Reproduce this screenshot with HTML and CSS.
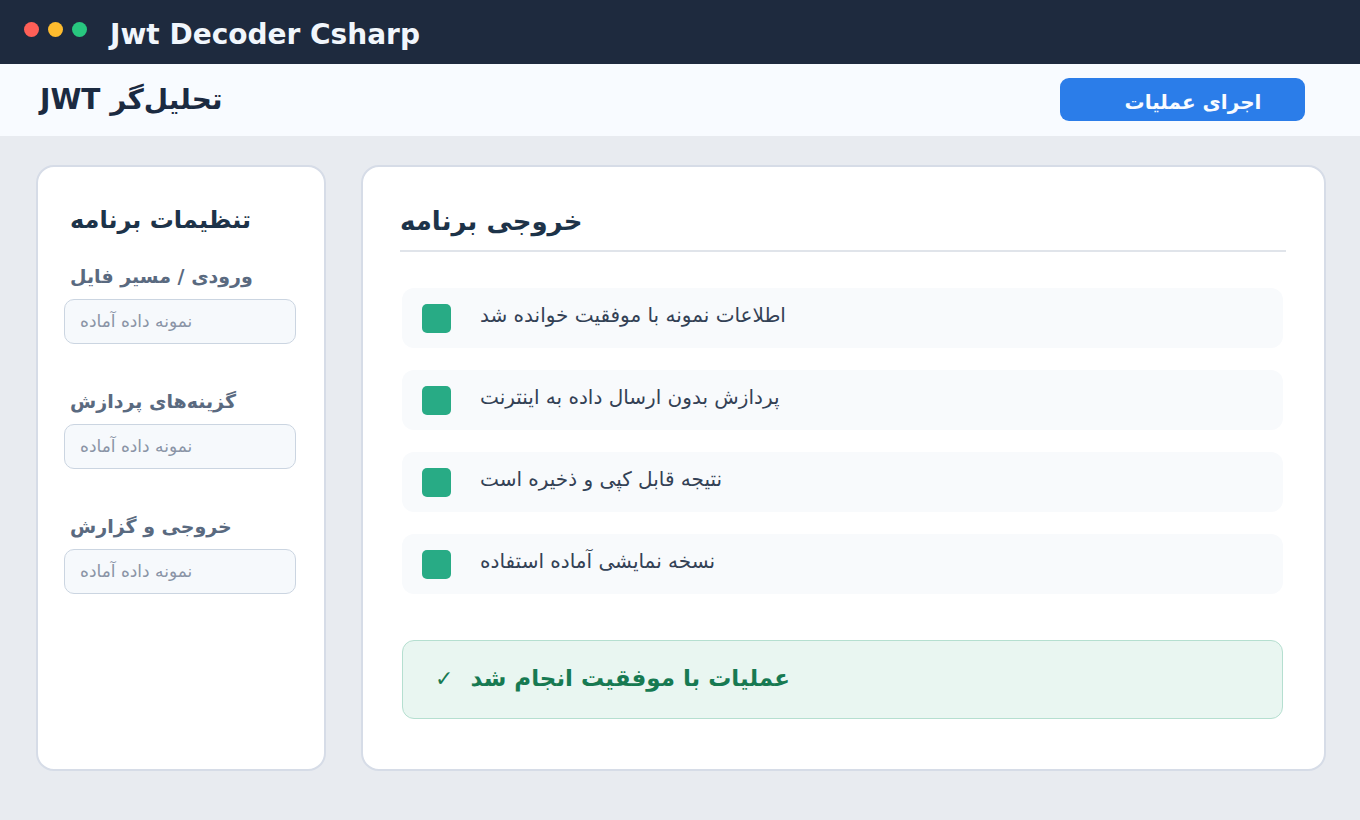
FILE: index.html
```html
<!DOCTYPE html>
<html lang="fa">
<head>
<meta charset="utf-8">
<title>Jwt Decoder Csharp</title>
<link rel="stylesheet" href="styles.css">
</head>
<body>
<header class="titlebar">
  <div class="dots"><span class="dot red"></span><span class="dot amber"></span><span class="dot green"></span></div>
  <h1 class="app-name">Jwt Decoder Csharp</h1>
</header>
<div class="toolbar">
  <h2 class="tool-title">JWT تحلیل‌گر</h2>
  <button class="run-btn">اجرای عملیات</button>
</div>
<main class="content">
  <aside class="card sidebar">
    <h3 class="side-title">تنظیمات برنامه</h3>
    <div class="field">
      <label class="field-label">ورودی / مسیر فایل</label>
      <input class="field-input" placeholder="نمونه داده آماده">
    </div>
    <div class="field">
      <label class="field-label">گزینه‌های پردازش</label>
      <input class="field-input" placeholder="نمونه داده آماده">
    </div>
    <div class="field">
      <label class="field-label">خروجی و گزارش</label>
      <input class="field-input" placeholder="نمونه داده آماده">
    </div>
  </aside>
  <section class="card output">
    <h3 class="out-title">خروجی برنامه</h3>
    <ul class="rows">
      <li class="row"><span class="mark"></span><span>اطلاعات نمونه با موفقیت خوانده شد</span></li>
      <li class="row"><span class="mark"></span><span>پردازش بدون ارسال داده به اینترنت</span></li>
      <li class="row"><span class="mark"></span><span>نتیجه قابل کپی و ذخیره است</span></li>
      <li class="row"><span class="mark"></span><span>نسخه نمایشی آماده استفاده</span></li>
    </ul>
    <div class="notice"><span class="check">✓</span><span class="notice-text">عملیات با موفقیت انجام شد</span></div>
  </section>
</main>
</body>
</html>
```

FILE: styles.css
```css
* { box-sizing: border-box; }
html, body { margin: 0; height: 100%; }
body {
  width: 1360px;
  height: 820px;
  overflow: hidden;
  background: #e8ebf0;
  font-family: "DejaVu Sans", sans-serif;
  color: #1e2a3e;
}
.titlebar {
  height: 64px;
  background: #1e2a3e;
  display: flex;
  align-items: center;
  padding-left: 24px;
}
.dots { display: flex; gap: 9px; margin-top: -6px; }
.dot { width: 15px; height: 15px; border-radius: 50%; }
.red { background: #ff5f57; }
.amber { background: #febc2e; }
.green { background: #28c77f; }
.app-name {
  margin: 4px 0 0 23px;
  font-size: 28px;
  font-weight: 700;
  color: #f1f6fc;
}
.toolbar {
  height: 72px;
  background: #f8fbff;
  display: flex;
  align-items: center;
  justify-content: space-between;
  padding: 0 55px 0 40px;
}
.tool-title { margin: -2px 0 0; font-size: 28px; font-weight: 700; color: #1b2a41; }
.run-btn {
  width: 245px;
  height: 43px;
  border: 0;
  border-radius: 9px;
  background: #2b7de9;
  color: #f8fbff;
  font: 700 20px "DejaVu Sans", sans-serif;
  padding: 4px 0 0 21px;
  margin-top: -1px;
}
.content {
  display: flex;
  gap: 35px;
  padding: 29px 34px 0 36px;
  height: 634px;
}
.card {
  background: #fff;
  border: 2px solid #d6dce7;
  border-radius: 18px;
}
.sidebar { width: 290px; height: 606px; padding: 0 28px 0 26px; }
.side-title { margin: 39px 0 0 6px; font-size: 24px; line-height: 28px; font-weight: 700; color: #1d3349; }
.field { margin-top: 20px; height: 105px; }
.field:first-of-type { margin-top: 31px; }
.field-label {
  display: block;
  margin-left: 6px;
  font-size: 19px;
  line-height: 22px;
  font-weight: 700;
  color: #5a6a80;
}
.field-input {
  display: block;
  width: 232px;
  height: 45px;
  margin-top: 12px;
  padding: 0 15px 2px;
  border: 1px solid #cbd5e1;
  border-radius: 10px;
  background: #f6f9fc;
  font: 17px "DejaVu Sans", sans-serif;
  outline: none;
}
.field-input::placeholder { color: #8a94a6; opacity: 1; }
.output { flex: 1; height: 606px; padding: 0 38px 0 37px; }
.out-title {
  margin: 0;
  padding: 38px 0 12px 0;
  height: 85px;
  border-bottom: 2px solid #e0e4ea;
  font-size: 26px;
  line-height: 33px;
  font-weight: 700;
  color: #1d3349;
}
.rows { list-style: none; margin: 36px 3px 0 2px; padding: 0; display: flex; flex-direction: column; gap: 22px; }
.row {
  height: 60px;
  display: flex;
  align-items: center;
  gap: 29px;
  padding-left: 20px;
  background: #f8fafc;
  border-radius: 12px;
  font-size: 20px;
  color: #334155;
}
.row span:last-child { margin-top: -6px; }
.mark { width: 29px; height: 29px; border-radius: 5px; background: #28ab85; }
.notice {
  margin: 46px 3px 0 2px;
  height: 79px;
  display: flex;
  align-items: center;
  gap: 17px;
  padding-left: 32px;
  background: #e9f6f1;
  border: 1px solid #b5dfd0;
  border-radius: 12px;
  font-size: 23px;
  font-weight: 700;
  color: #177a52;
}
.check { font-weight: 400; font-size: 22px; margin-top: -3px; }
.notice-text { margin-top: -4px; }
```
